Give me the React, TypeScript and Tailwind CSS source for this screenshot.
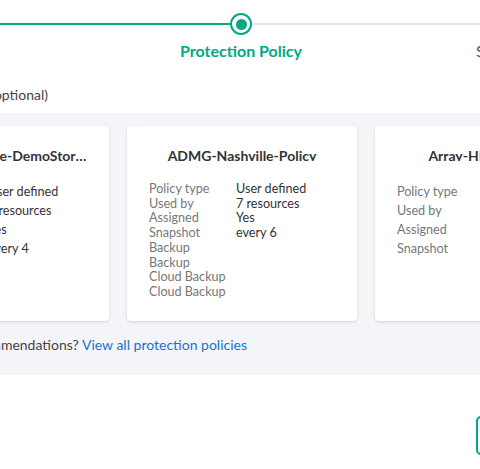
import React from 'react';

type Row = { label: string; value?: string };

type Policy = {
    title: string;
    rows: Row[];
    rowClass: string;
    gapClass: string;
};

const policies: Policy[] = [
    {
        title: 'ADMG-Nashville-DemoStorage-Policy',
        rows: [
            { label: 'Policy type', value: 'User defined' },
            { label: 'Used by', value: '3 resources' },
            { label: 'Assigned', value: 'Yes' },
            { label: 'Snapshot', value: 'every 4' },
        ],
        rowClass: 'leading-[19px]',
        gapClass: 'mt-[21px]',
    },
    {
        title: 'ADMG-Nashville-Policy',
        rows: [
            { label: 'Policy type', value: 'User defined' },
            { label: 'Used by', value: '7 resources' },
            { label: 'Assigned', value: 'Yes' },
            { label: 'Snapshot', value: 'every 6' },
            { label: 'Backup' },
            { label: 'Backup' },
            { label: 'Cloud Backup' },
            { label: 'Cloud Backup' },
        ],
        rowClass: 'leading-[14.7px]',
        gapClass: 'mt-[21px]',
    },
    {
        title: 'Array-HPE-Policy-1',
        rows: [
            { label: 'Policy type', value: 'User defined' },
            { label: 'Used by', value: '2 resources' },
            { label: 'Assigned', value: 'Yes' },
            { label: 'Snapshot', value: 'every 12' },
        ],
        rowClass: 'leading-[19px]',
        gapClass: 'mt-[21px]',
    },
];

function PolicyCard({ policy }: { policy: Policy }) {
    return (
        <div className="w-[230px] h-[195px] shrink-0 bg-white rounded-[4px] shadow-[0_1px_3px_rgba(0,0,0,0.14)] px-[22px] pt-[23px]">
            <div className="h-[12px] leading-[14px] text-[14px] font-bold text-[#333] text-center truncate">
                {policy.title}
            </div>
            <div className={`${policy.gapClass} text-[12.6px]`}>
                {policy.rows.map((row, i) => (
                    <div key={i} className={`flex ${policy.rowClass}`}>
                        <span className="w-[87px] shrink-0 text-[#777]">{row.label}</span>
                        <span className="text-[#333] whitespace-nowrap">{row.value}</span>
                    </div>
                ))}
            </div>
        </div>
    );
}

export default function App() {
    return (
        <div className="w-[480px] h-[469px] overflow-hidden bg-white font-['Lato',sans-serif]">
            {/* Stepper */}
            <div className="flex items-center pt-[13px]">
                <div className="w-[230px] h-[2px] bg-[#01a982] shrink-0"></div>
                <div className="w-[22px] h-[22px] rounded-full border-[2.5px] border-[#01a982] flex items-center justify-center shrink-0">
                    <div className="w-[11px] h-[11px] rounded-full bg-[#01a982]"></div>
                </div>
                <div className="flex-1 h-[2px] bg-[#e4e4ea]"></div>
            </div>
            <div className="flex mt-[6px] leading-[20px] text-[16px]">
                <div className="ml-[141px] w-[200px] shrink-0 text-center font-bold text-[#01a982]">
                    Protection Policy
                </div>
                <div className="ml-[135px] whitespace-nowrap text-[#555]">Summary</div>
            </div>

            {/* Heading */}
            <div className="flex justify-end w-[48px] mt-[24px] leading-[20px] text-[14px] text-[#444]">
                <span className="whitespace-nowrap shrink-0">Select a protection policy (optional)</span>
            </div>

            {/* Recommendations */}
            <div className="mt-[8px] bg-[#f4f5f9] pt-[13px] pb-[20px]">
                <div className="flex gap-[18px] ml-[-121px]">
                    {policies.map((p) => (
                        <PolicyCard key={p.title} policy={p} />
                    ))}
                </div>
                <div className="flex justify-end w-[247px] mt-[14px] leading-[20px] text-[14px]">
                    <span className="whitespace-nowrap shrink-0 text-[#444]">
                        Not seeing recommendations?{' '}
                        <a className="text-[#1a72d0]">View all protection policies</a>
                    </span>
                </div>
            </div>

            {/* Footer */}
            <div className="flex mt-[41px]">
                <button className="ml-[476px] shrink-0 h-[39px] px-5 rounded-[5px] border-2 border-[#01a982] text-[#333] font-bold text-[14px] whitespace-nowrap">
                    Back
                </button>
            </div>
        </div>
    );
}
